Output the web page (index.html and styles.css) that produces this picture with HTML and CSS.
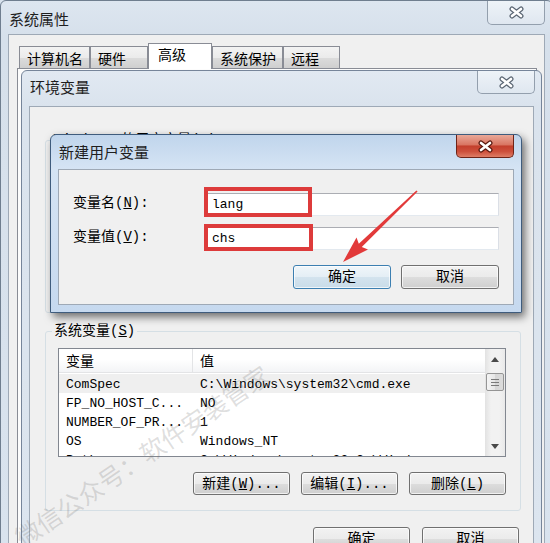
FILE: index.html
```html
<!DOCTYPE html>
<html lang="zh-CN">
<head>
  <meta charset="UTF-8">
  <title>系统属性 - 环境变量</title>
  <link rel="stylesheet" href="styles.css">
</head>
<body>

  <!-- 系统属性 -->
  <div class="win sys">
    <div class="titlebar">
      <span class="title">系统属性</span>
      <span class="close">
        <svg width="17" height="13" viewBox="0 0 17 13"><path d="M4 3l9 7M13 3l-9 7" stroke="#5b6673" stroke-width="5" stroke-linecap="round"/><path d="M4 3l9 7M13 3l-9 7" stroke="#fff" stroke-width="2.6" stroke-linecap="round"/></svg>
      </span>
    </div>
    <div class="client">
      <div class="tabs">
        <span class="tab tab-name">计算机名</span>
        <span class="tab tab-hw">硬件</span>
        <span class="tab tab-adv active">高级</span>
        <span class="tab tab-prot">系统保护</span>
        <span class="tab tab-remote">远程</span>
      </div>
      <div class="tabpage"></div>
    </div>
  </div>

  <!-- 环境变量 -->
  <div class="win env">
    <div class="titlebar">
      <span class="title">环境变量</span>
      <span class="close">
        <svg width="17" height="13" viewBox="0 0 17 13"><path d="M4 3l9 7M13 3l-9 7" stroke="#5b6673" stroke-width="5" stroke-linecap="round"/><path d="M4 3l9 7M13 3l-9 7" stroke="#fff" stroke-width="2.6" stroke-linecap="round"/></svg>
      </span>
    </div>
    <div class="client">
      <div class="group group-user">
        <span class="group-label">Windows 的用户变量(<u>U</u>)</span>
      </div>

      <div class="group group-sys">
        <span class="group-label">系统变量(<u>S</u>)</span>
        <div class="listview">
          <div class="lv-main">
            <div class="lv-head">
              <span class="col-name">变量</span>
              <span class="col-value">值</span>
            </div>
            <div class="lv-body">
              <div class="lv-row sel"><span class="col-name">ComSpec</span><span class="col-value">C:\Windows\system32\cmd.exe</span></div>
              <div class="lv-row"><span class="col-name">FP_NO_HOST_C...</span><span class="col-value">NO</span></div>
              <div class="lv-row"><span class="col-name">NUMBER_OF_PR...</span><span class="col-value">1</span></div>
              <div class="lv-row"><span class="col-name">OS</span><span class="col-value">Windows_NT</span></div>
              <div class="lv-row"><span class="col-name">Path</span><span class="col-value">C:\Windows\system32;C:\Windows;...</span></div>
            </div>
          </div>
          <div class="vscroll">
            <span class="sb-arrow"><svg width="8" height="5" viewBox="0 0 8 5"><path d="M0 5h8L4 0z" fill="#4a4a4a"/></svg></span>
            <span class="sb-thumb"><svg width="8" height="7" viewBox="0 0 8 7"><path d="M0 .5h8M0 3.5h8M0 6.5h8" stroke="#7a7a7a"/></svg></span>
            <span class="sb-fill"></span>
            <span class="sb-arrow"><svg width="8" height="5" viewBox="0 0 8 5"><path d="M0 0h8L4 5z" fill="#4a4a4a"/></svg></span>
          </div>
        </div>
        <div class="button-row group-buttons">
          <button class="btn">新建(<u>W</u>)...</button>
          <button class="btn">编辑(<u>I</u>)...</button>
          <button class="btn">删除(<u>L</u>)</button>
        </div>
      </div>

      <div class="button-row env-buttons">
        <button class="btn">确定</button>
        <button class="btn">取消</button>
      </div>
    </div>
  </div>

  <!-- 新建用户变量 -->
  <div class="win newvar">
    <div class="titlebar">
      <span class="title">新建用户变量</span>
      <span class="close active">
        <svg width="17" height="13" viewBox="0 0 17 13"><path d="M4 3l9 7M13 3l-9 7" stroke="#5a1a10" stroke-width="5" stroke-linecap="round"/><path d="M4 3l9 7M13 3l-9 7" stroke="#fff" stroke-width="2.6" stroke-linecap="round"/></svg>
      </span>
    </div>
    <div class="client">
      <div class="fields">
        <label class="field-label" for="varName">变量名(<u>N</u>):</label>
        <input class="textbox" id="varName" type="text" value="lang">
        <label class="field-label" for="varValue">变量值(<u>V</u>):</label>
        <input class="textbox" id="varValue" type="text" value="chs">
      </div>
      <div class="button-row dialog-buttons">
        <button class="btn default">确定</button>
        <button class="btn">取消</button>
      </div>
    </div>
    <span class="mark mark-name"></span>
    <span class="mark mark-value"></span>
  </div>

  <!-- 标注箭头 -->
  <svg class="arrow" width="550" height="543" viewBox="0 0 550 543">
    <polygon points="416.4,190.4 417.6,191.6 361.8,247 368,249.5 343,262 356.5,237.5 358.8,243.8" fill="#e23a3a"/>
  </svg>

  <div class="watermark">微信公众号：软件安装管家</div>

</body>
</html>
```

FILE: styles.css
```css
* {
  box-sizing: border-box;
}

html, body {
  margin: 0;
}

body {
  position: relative;
  width: 550px;
  height: 543px;
  overflow: hidden;
  background: #d8e2ed;
  font-family: "Noto Sans CJK SC", sans-serif;
  font-size: 14px;
  color: #000;
}

/* windows */
.win {
  position: absolute;
  display: flex;
  flex-direction: column;
  border: 1px solid #6f7e8f;
  border-radius: 6px 6px 0 0;
  background: linear-gradient(#dde6f0, #d6e0eb 36px, #d9e3ee);
}

.sys {
  left: 0;
  top: 0;
  width: 553px;
  height: 560px;
}

.env {
  left: 21px;
  top: 70px;
  width: 521px;
  height: 500px;
  border-color: #76859a;
  background: linear-gradient(#e1e9f2, #dae3ed 36px, #dce5ef);
}

.newvar {
  left: 50px;
  top: 134px;
  width: 472px;
  height: 179px;
  border-color: #3f5c7d;
  background: linear-gradient(#c0d5ec, #d5e4f4 34px, #c6d9ef);
  box-shadow: 3px 4px 9px rgba(0, 0, 0, 0.55);
}

.titlebar {
  display: flex;
  align-items: flex-start;
  flex: none;
}

.sys .titlebar { height: 33px; }
.env .titlebar { height: 35px; }
.newvar .titlebar { height: 34px; }

.title {
  padding: 8px 0 0 8px;
  font-size: 15px;
  line-height: 20px;
  color: #1e1e1e;
}

.env .title { padding-top: 6px; }
.newvar .title { padding-top: 7px; }

.close {
  display: flex;
  align-items: center;
  justify-content: center;
  width: 58px;
  height: 23px;
  margin-left: auto;
  margin-right: 6px;
  border: 1px solid #939fad;
  border-top: none;
  border-radius: 0 0 5px 5px;
  background: linear-gradient(#eef3f8, #dfe7f0);
}

.sys .close {
  height: 24px;
  margin-right: 7px;
}

.close.active {
  margin-right: 7px;
  border-color: #6e2418;
  background: linear-gradient(#e9a898 0%, #d97561 45%, #c33f2c 50%, #cd503c 75%, #de7d66 100%);
}

.client {
  flex: 1;
  margin: 0 7px;
  border: 1px solid #9ea9b6;
  background: #f0f0f0;
}

/* tabs of 系统属性 */
.sys .client {
  display: flex;
  flex-direction: column;
  padding: 8px 7px 0 8px;
}

.tabs {
  position: relative;
  z-index: 1;
  display: flex;
  align-items: flex-end;
  padding-left: 2px;
}

.tab {
  height: 22px;
  margin-bottom: 1px;
  padding: 1px 0 0 7px;
  border: 1px solid #898c95;
  border-bottom: none;
  background: linear-gradient(#f3f3f3, #ebebeb 50%, #dcdcdc 51%, #cfcfcf);
  line-height: 20px;
}

.tab.active {
  height: 26px;
  margin-bottom: 0;
  padding: 0 0 0 9px;
  background: #fff;
}

.tab-name { width: 71px; }
.tab-hw { width: 58px; }
.tab-adv { width: 64px; }
.tab-prot { width: 71px; }
.tab-remote { width: 57px; }

.tabpage {
  flex: 1;
  margin-top: -1px;
  border: 1px solid #898c95;
  background: #fcfcfc;
}

/* group boxes */
.group {
  margin: 0 12px 0 15px;
  padding: 0 14px 15px 12px;
  border: 1px solid #d5dfe5;
  border-radius: 3px;
}

.group-user {
  height: 173px;
  margin-top: 33px;
}

.group-sys {
  margin-top: 18px;
}

.group-label {
  display: block;
  width: fit-content;
  margin: -9px 0 0 -6px;
  padding: 0 2px;
  background: #f0f0f0;
  line-height: 16px;
  font-family: "Liberation Mono", "Noto Sans CJK SC", monospace;
  font-size: 14px;
}

/* list view */
.listview {
  display: flex;
  height: 109px;
  margin-top: 9px;
  border: 1px solid #828790;
  background: #fff;
}

.lv-main {
  flex: 1;
  overflow: hidden;
}

.lv-head {
  display: flex;
  height: 24px;
  border-bottom: 1px solid #e3e4e6;
  background: linear-gradient(#fff 45%, #f3f4f6);
}

.lv-head span {
  padding-left: 7px;
  line-height: 23px;
}

.lv-head .col-name {
  border-right: 1px solid #e3e4e6;
}

.lv-body {
  padding-top: 1px;
}

.lv-row {
  display: flex;
  height: 19px;
  font-family: "Liberation Mono", monospace;
  font-size: 13px;
  line-height: 21px;
}

.lv-row span {
  padding-left: 7px;
  white-space: nowrap;
}

.lv-row.sel {
  background: #efefef;
}

.col-name {
  flex: none;
  width: 134px;
}

.vscroll {
  display: flex;
  flex-direction: column;
  width: 20px;
  background: linear-gradient(90deg, #e2e2e2, #f2f2f2 30%, #f2f2f2 70%, #e9e9e9);
}

.sb-arrow {
  display: flex;
  align-items: center;
  justify-content: center;
  height: 20px;
}

.sb-thumb {
  display: flex;
  align-items: center;
  justify-content: center;
  height: 18px;
  margin: 4px 1px 0;
  border: 1px solid #959595;
  border-radius: 2px;
  background: linear-gradient(90deg, #f4f4f4, #e6e6e6 50%, #d6d6d6 51%, #dcdcdc);
}

.sb-fill {
  flex: 1;
}

/* buttons */
.button-row {
  display: flex;
  justify-content: flex-end;
}

.btn {
  width: 97px;
  height: 23px;
  padding: 0;
  border: 1px solid #707070;
  border-radius: 3px;
  background: linear-gradient(#f2f2f2, #ebebeb 50%, #dddddd 51%, #cfcfcf);
  box-shadow: inset 0 0 0 1px rgba(255, 255, 255, 0.7);
  font-family: "Liberation Mono", "Noto Sans CJK SC", monospace;
  font-size: 14px;
  line-height: 20px;
  color: #000;
}

.btn.default {
  border-color: #3c7fb1;
  background: linear-gradient(#f0f6fa, #e4eef5 50%, #d3e3ee 51%, #c9dce9);
}

.group-buttons {
  gap: 11px;
  margin-top: 15px;
}

.env-buttons {
  gap: 12px;
  margin-top: 16px;
  padding-right: 14px;
}

.env-buttons .btn {
  height: 24px;
}

/* 新建用户变量 dialog */
.newvar .client {
  margin-bottom: 7px;
  padding: 23px 14px 0 14px;
}

.fields {
  display: grid;
  grid-template-columns: 134px 1fr;
  grid-auto-rows: 23px;
  row-gap: 11px;
}

.field-label {
  font-family: "Liberation Mono", "Noto Sans CJK SC", monospace;
  font-size: 14px;
  line-height: 20px;
}

.textbox {
  width: 100%;
  height: 23px;
  margin: 0;
  padding: 0 4px;
  border: 1px solid;
  border-color: #abadb3 #dbdfe6 #e3e9ef #e2e3ea;
  background: #fff;
  font-family: "Liberation Mono", monospace;
  font-size: 13px;
  color: #000;
  outline: none;
}

.dialog-buttons {
  gap: 10px;
  margin-top: 15px;
}

.dialog-buttons .btn {
  width: 98px;
  height: 24px;
}

/* annotations over the screenshot */
.mark {
  position: absolute;
  left: 153px;
  border: 4px solid #dd3b3b;
}

.mark-name {
  top: 52px;
  width: 108px;
  height: 30px;
}

.mark-value {
  top: 89px;
  width: 109px;
  height: 27px;
}

.arrow {
  position: absolute;
  left: 0;
  top: 0;
  pointer-events: none;
}

.watermark {
  position: absolute;
  left: 17px;
  top: 524px;
  font-size: 25px;
  line-height: 30px;
  white-space: nowrap;
  color: rgba(110, 110, 110, 0.22);
  transform: rotate(-34deg);
  transform-origin: 0 50%;
  pointer-events: none;
}
```
